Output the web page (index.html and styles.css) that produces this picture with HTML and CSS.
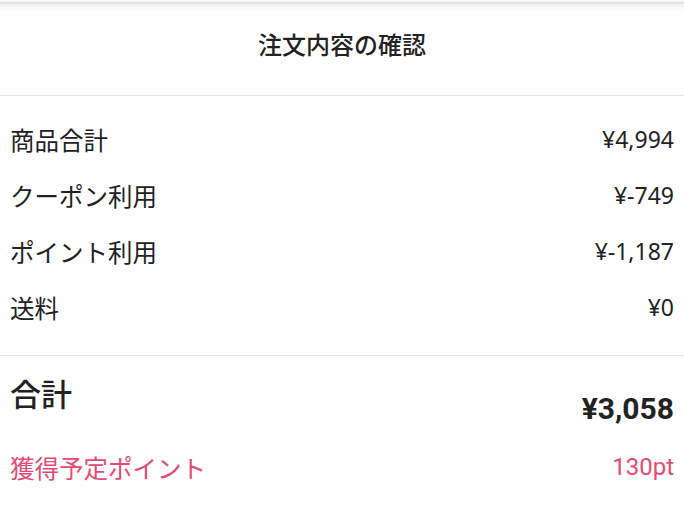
FILE: index.html
```html
<!DOCTYPE html>
<html lang="ja">
<head>
<meta charset="utf-8">
<title>注文内容の確認</title>
<link rel="stylesheet" href="styles.css">
</head>
<body>
<div class="page">
  <header class="header">
    <h1 class="title">注文内容の確認</h1>
  </header>
  <section class="list">
    <div class="row"><span class="label">商品合計</span><span class="value">¥4,994</span></div>
    <div class="row"><span class="label">クーポン利用</span><span class="value">¥-749</span></div>
    <div class="row"><span class="label">ポイント利用</span><span class="value">¥-1,187</span></div>
    <div class="row"><span class="label">送料</span><span class="value">¥0</span></div>
  </section>
  <section class="summary">
    <div class="total-row">
      <span class="total-label">合計</span>
      <span class="total-value">¥3,058</span>
    </div>
    <div class="points-row">
      <span class="points-label">獲得予定ポイント</span>
      <span class="points-value">130pt</span>
    </div>
  </section>
</div>
</body>
</html>
```

FILE: styles.css
```css
* { box-sizing: border-box; }
html, body {
  margin: 0;
  padding: 0;
  background: #fff;
}
body {
  font-family: "Noto Sans", "Noto Sans CJK JP", sans-serif;
  color: #222;
}
.page {
  width: 684px;
  height: 513px;
  overflow: hidden;
}
.header {
  height: 96px;
  display: flex;
  align-items: center;
  justify-content: center;
  padding-bottom: 8px;
  border-bottom: 1px solid #e5e5e5;
  background: linear-gradient(to bottom, #f7f7f7 0, #f4f4f4 2px, #dddddd 2px, #ececec 4px, #fafafa 8px, #ffffff 12px);
}
.title {
  margin: 0;
  font-family: "Noto Sans CJK JP", sans-serif;
  font-size: 24px;
  font-weight: 500;
  color: #222;
}
.list {
  padding: 15px 10px 20px 10px;
  border-bottom: 1px solid #e5e5e5;
}
.row {
  height: 56px;
  display: flex;
  align-items: center;
  justify-content: space-between;
}
.label {
  font-family: "Noto Sans CJK JP", sans-serif;
  font-size: 24.5px;
  color: #222;
}
.value {
  font-family: "Noto Sans", sans-serif;
  font-size: 23px;
  color: #222;
}
.summary {
  padding: 0 10px 0 10px;
}
.total-row {
  margin-top: 16px;
  display: flex;
  align-items: flex-start;
  justify-content: space-between;
}
.total-label {
  font-family: "Noto Sans CJK JP", sans-serif;
  font-size: 31px;
  font-weight: 500;
  line-height: 42px;
  color: #222;
}
.total-value {
  margin-top: 16px;
  font-family: Roboto, sans-serif;
  font-size: 30px;
  font-weight: 700;
  line-height: 42px;
  color: #222;
}
.points-row {
  margin-top: 9px;
  height: 56px;
  display: flex;
  align-items: center;
  justify-content: space-between;
  color: #e84872;
}
.points-label {
  font-family: "Noto Sans CJK JP", sans-serif;
  font-size: 24.5px;
}
.points-value {
  font-family: Roboto, sans-serif;
  font-size: 24px;
}
```
